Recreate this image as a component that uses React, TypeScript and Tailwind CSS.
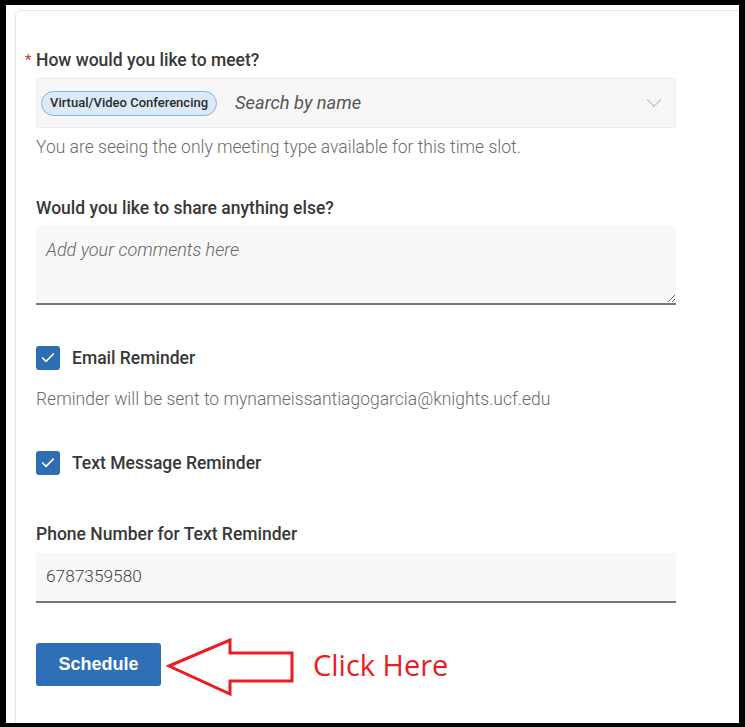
import { Check, ChevronDown } from "lucide-react";

const labelCls = "text-[17.5px] font-medium leading-6 text-[#383838]";
const helpCls = "text-[17.5px] font-light leading-6 text-[#6b6b6b]";

function CheckRow({ label }: { label: string }) {
	return (
		<label className="flex items-center gap-3">
			<span className="flex h-6 w-6 items-center justify-center rounded-[3px] bg-[#2e6db4]">
				<Check size={16} strokeWidth={2.5} className="text-white" />
			</span>
			<span className={labelCls}>{label}</span>
		</label>
	);
}

function ClickArrow() {
	return (
		<svg width="130" height="58" viewBox="0 0 130 58" className="shrink-0">
			<polygon
				points="3,28 64,2 64,15 126,15 126,43 64,43 64,56"
				fill="none"
				stroke="#ec1c24"
				strokeWidth="3"
			/>
		</svg>
	);
}

export default function App() {
	return (
		<div className="h-[727px] w-[745px] overflow-hidden bg-black pb-[4px] pl-[6px] pr-[6px] pt-[5px]">
			<div className="h-full overflow-hidden bg-white pl-[9px] pt-[5px] font-['Roboto',sans-serif]">
				<div className="h-[760px] w-[760px] rounded-tl-[6px] border border-[#e8e8e8] pl-[20px] pt-[37px]">
					<div className="w-[640px]">
						{/* meeting type */}
						<div className="-ml-[11px] flex items-center">
							<span className="mr-[2px] w-[9px] text-[15px] leading-6 text-[#d0342c]">*</span>
							<span className={labelCls}>How would you like to meet?</span>
						</div>
						<div className="mt-[6px] flex h-[50px] items-center border border-[#ececec] bg-[#f7f7f7] pl-[4px] pr-[8px]">
							<span className="flex h-[25px] items-center rounded-full border border-[#7eb4e6] bg-[#dce9f8] px-[8px] text-[13px] font-medium text-[#2b2b2b]">
								Virtual/Video Conferencing
							</span>
							<span className="ml-[18px] flex-1 text-[18.3px] italic text-[#555]">Search by name</span>
							<ChevronDown size={26} strokeWidth={1.2} className="text-[#c4c4c4]" />
						</div>
						<p className={`${helpCls} mt-[7px]`}>You are seeing the only meeting type available for this time slot.</p>

						{/* comments */}
						<p className={`${labelCls} mt-[37px]`}>Would you like to share anything else?</p>
						<textarea
							placeholder="Add your comments here"
							className="mt-[6px] block h-[79px] w-full border-b-2 border-[#777] bg-[#f8f8f8] px-[10px] py-[10px] text-[18px] font-light outline-none placeholder:italic placeholder:text-[#666]"
						/>

						{/* reminders */}
						<div className="mt-[41px]">
							<CheckRow label="Email Reminder" />
						</div>
						<p className={`${helpCls} mt-[17px]`}>Reminder will be sent to mynameissantiagogarcia@knights.ucf.edu</p>
						<div className="mt-[40px]">
							<CheckRow label="Text Message Reminder" />
						</div>

						<p className={`${labelCls} mt-[47px]`}>Phone Number for Text Reminder</p>
						<div className="mt-[7px] flex h-[50px] items-center border-b-2 border-[#777] bg-[#f8f8f8] px-[10px] text-[17.3px] font-light text-[#444]">
							6787359580
						</div>

						<div className="mt-[40px] flex items-start">
							<button
								type="button"
								className="h-[43px] w-[125px] rounded-[3px] bg-[#2e6fb7] font-['Liberation_Sans',sans-serif] text-[18px] font-bold text-white"
							>
								Schedule
							</button>
							<div className="-mt-[5px] ml-[5px]">
								<ClickArrow />
							</div>
							<span className="ml-[17px] mt-[2px] font-['Open_Sans',sans-serif] text-[29px] leading-[40px] text-[#ec1c24]">
								Click Here
							</span>
						</div>
					</div>
				</div>
			</div>
		</div>
	);
}
